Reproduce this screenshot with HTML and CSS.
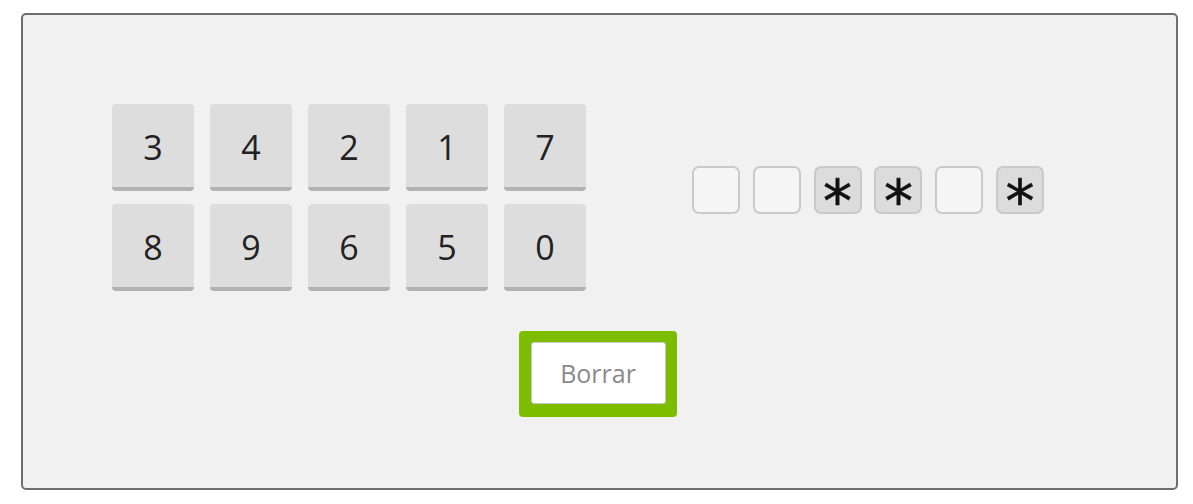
FILE: index.html
```html
<!DOCTYPE html>
<html lang="es">
<head>
<meta charset="utf-8">
<title>Teclado</title>
<link rel="stylesheet" href="styles.css">
</head>
<body>
<div class="panel">
  <div class="top">
    <div class="keypad">
      <button class="key">3</button>
      <button class="key">4</button>
      <button class="key">2</button>
      <button class="key">1</button>
      <button class="key">7</button>
      <button class="key">8</button>
      <button class="key">9</button>
      <button class="key">6</button>
      <button class="key">5</button>
      <button class="key">0</button>
    </div>
    <div class="slots">
      <span class="slot"></span>
      <span class="slot"></span>
      <span class="slot filled">*</span>
      <span class="slot filled">*</span>
      <span class="slot"></span>
      <span class="slot filled">*</span>
    </div>
  </div>
  <div class="actions">
    <div class="focus-ring">
      <button class="clear">Borrar</button>
    </div>
  </div>
</div>
</body>
</html>
```
FILE: styles.css
```css
html, body {
  margin: 0;
  padding: 0;
  background: #ffffff;
}
body {
  padding: 13px 0 0 21px;
  font-family: "Open Sans", "DejaVu Sans", sans-serif;
}
.panel {
  box-sizing: border-box;
  width: 1157px;
  height: 477px;
  border: 2px solid #6e6e6e;
  border-radius: 5px;
  background: #f1f1f1;
  padding: 89px 0 0 89px;
  display: flex;
  flex-direction: column;
}
.top {
  display: flex;
  align-items: flex-start;
}
.keypad {
  display: grid;
  grid-template-columns: repeat(5, 82px);
  column-gap: 16px;
  row-gap: 13px;
}
.key {
  box-sizing: border-box;
  width: 82px;
  height: 87px;
  margin: 0;
  padding: 2px 0 0 0;
  border: none;
  border-bottom: 4px solid #b2b2b2;
  border-radius: 4px;
  background: #dddddd;
  color: #222222;
  font-family: "Open Sans", "DejaVu Sans", sans-serif;
  font-size: 34px;
  line-height: 1;
}
.slots {
  display: flex;
  gap: 12.8px;
  margin: 62px 0 0 106px;
}
.slot {
  box-sizing: border-box;
  width: 48px;
  height: 48px;
  padding-top: 5px;
  border: 2px solid #c9c9c9;
  border-radius: 7px;
  background: #f5f5f5;
  display: flex;
  justify-content: center;
  align-items: flex-start;
  font-family: "DejaVu Sans", sans-serif;
  font-size: 58px;
  line-height: 1;
  color: #111111;
  -webkit-text-stroke: 0.6px #111111;
}
.slot.filled {
  background: #dcdcdc;
}
.actions {
  display: flex;
  justify-content: center;
  margin: 40px 0 0 -93px;
}
.focus-ring {
  padding: 11px 11px 13px 12px;
  background: #7dbd00;
  border-radius: 4px;
  display: flex;
}
.clear {
  box-sizing: border-box;
  width: 135px;
  height: 62px;
  margin: 0;
  border: 1px solid #c8c8c8;
  border-radius: 3px;
  background: #ffffff;
  color: #8a8a8a;
  font-family: "Open Sans", "DejaVu Sans", sans-serif;
  font-size: 25px;
  padding: 0;
}
```
